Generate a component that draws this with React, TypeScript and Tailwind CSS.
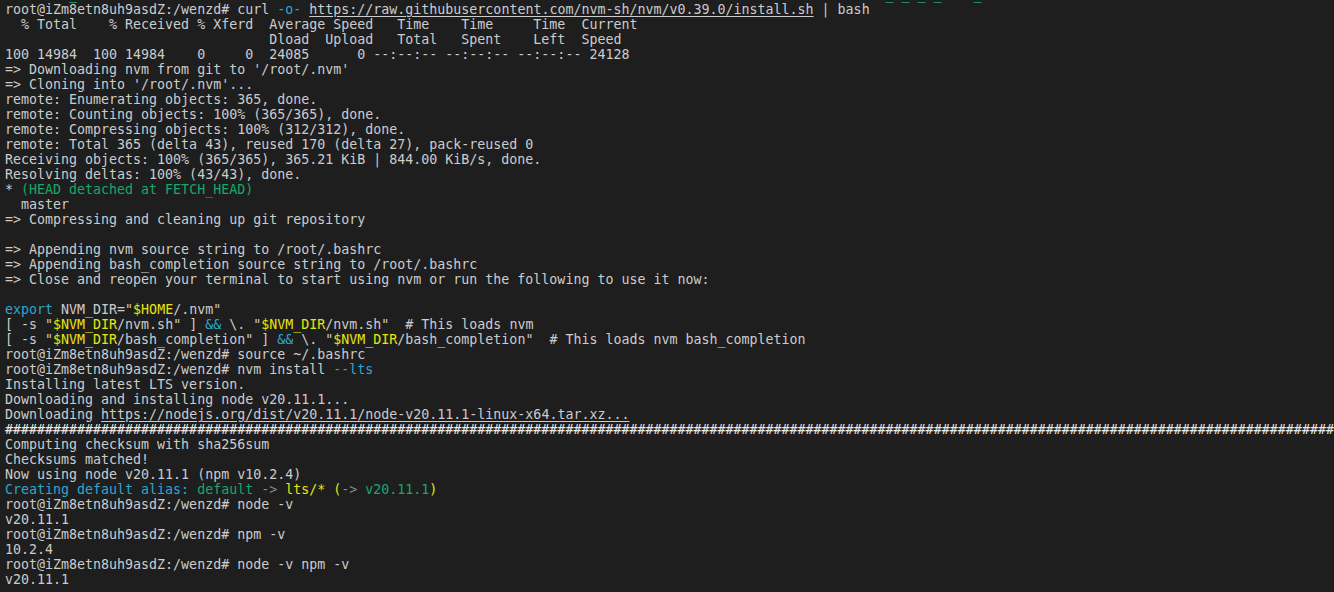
import type { ReactNode } from 'react';

const PROMPT = 'root@iZm8etn8uh9asdZ:/wenzd# ';

const C = ({ children }: { children: ReactNode }) => <span className="text-[#2ca7cf]">{children}</span>;
const Y = ({ children }: { children: ReactNode }) => <span className="text-[#e5e510]">{children}</span>;
const G = ({ children }: { children: ReactNode }) => <span className="text-[#14a86b]">{children}</span>;
const D = ({ children }: { children: ReactNode }) => <span className="text-[#8a8a8a]">{children}</span>;
const U = ({ children }: { children: ReactNode }) => <span className="underline underline-offset-2">{children}</span>;

const Line = ({ children }: { children?: ReactNode }) => (
  <div className="h-[15px] whitespace-pre">{children ?? ' '}</div>
);

export default function App() {
  return (
    <div className="w-[1334px] h-[592px] overflow-hidden bg-[#1e1e1e] text-[#cccccc] font-['DejaVu_Sans_Mono',monospace] text-[13.3px] leading-[15px] pl-[5px] pt-[2px]">
      {/* tail of the previous line, scrolled almost out of view */}
      <div className="h-0 relative">
        <div className="absolute -top-[15px] left-0 whitespace-pre text-[#23d18b]">
          {'        _                                                                                                     _ _ _ _    _'}
        </div>
      </div>
      <Line>
        {PROMPT}curl <C>-o-</C> <U>https://raw.githubusercontent.com/nvm-sh/nvm/v0.39.0/install.sh</U> | bash
      </Line>
      <Line>{'  % Total    % Received % Xferd  Average Speed   Time    Time     Time  Current'}</Line>
      <Line>{'                                 Dload  Upload   Total   Spent    Left  Speed'}</Line>
      <Line>{'100 14984  100 14984    0     0  24085      0 --:--:-- --:--:-- --:--:-- 24128'}</Line>
      <Line>{"=> Downloading nvm from git to '/root/.nvm'"}</Line>
      <Line>{"=> Cloning into '/root/.nvm'..."}</Line>
      <Line>remote: Enumerating objects: 365, done.</Line>
      <Line>remote: Counting objects: 100% (365/365), done.</Line>
      <Line>remote: Compressing objects: 100% (312/312), done.</Line>
      <Line>remote: Total 365 (delta 43), reused 170 (delta 27), pack-reused 0</Line>
      <Line>Receiving objects: 100% (365/365), 365.21 KiB | 844.00 KiB/s, done.</Line>
      <Line>Resolving deltas: 100% (43/43), done.</Line>
      <Line>
        * <G>(HEAD detached at FETCH_HEAD)</G>
      </Line>
      <Line>{'  master'}</Line>
      <Line>=&gt; Compressing and cleaning up git repository</Line>
      <Line />
      <Line>=&gt; Appending nvm source string to /root/.bashrc</Line>
      <Line>=&gt; Appending bash_completion source string to /root/.bashrc</Line>
      <Line>=&gt; Close and reopen your terminal to start using nvm or run the following to use it now:</Line>
      <Line />
      <Line>
        <C>export</C> NVM_DIR="<Y>$HOME</Y>/.nvm"
      </Line>
      <Line>
        [ -s "<Y>$NVM_DIR</Y>/nvm.sh" ] <C>&amp;&amp;</C> \. "<Y>$NVM_DIR</Y>/nvm.sh"{'  # This loads nvm'}
      </Line>
      <Line>
        [ -s "<Y>$NVM_DIR</Y>/bash_completion" ] <C>&amp;&amp;</C> \. "<Y>$NVM_DIR</Y>/bash_completion"
        {'  # This loads nvm bash_completion'}
      </Line>
      <Line>{PROMPT}source ~/.bashrc</Line>
      <Line>
        {PROMPT}nvm install <C>--lts</C>
      </Line>
      <Line>Installing latest LTS version.</Line>
      <Line>Downloading and installing node v20.11.1...</Line>
      <Line>
        Downloading <U>https://nodejs.org/dist/v20.11.1/node-v20.11.1-linux-x64.tar.xz...</U>
      </Line>
      <Line>
        <span className="text-[#e8e8e8]">{'#'.repeat(170)}</span>
      </Line>
      <Line>Computing checksum with sha256sum</Line>
      <Line>Checksums matched!</Line>
      <Line>Now using node v20.11.1 (npm v10.2.4)</Line>
      <Line>
        <C>Creating default alias:</C> <G>default</G> <D>-&gt;</D> <Y>lts/* (</Y>
        <D>-&gt;</D> <G>v20.11.1</G>
        <Y>)</Y>
      </Line>
      <Line>{PROMPT}node -v</Line>
      <Line>v20.11.1</Line>
      <Line>{PROMPT}npm -v</Line>
      <Line>10.2.4</Line>
      <Line>{PROMPT}node -v npm -v</Line>
      <Line>v20.11.1</Line>
    </div>
  );
}
